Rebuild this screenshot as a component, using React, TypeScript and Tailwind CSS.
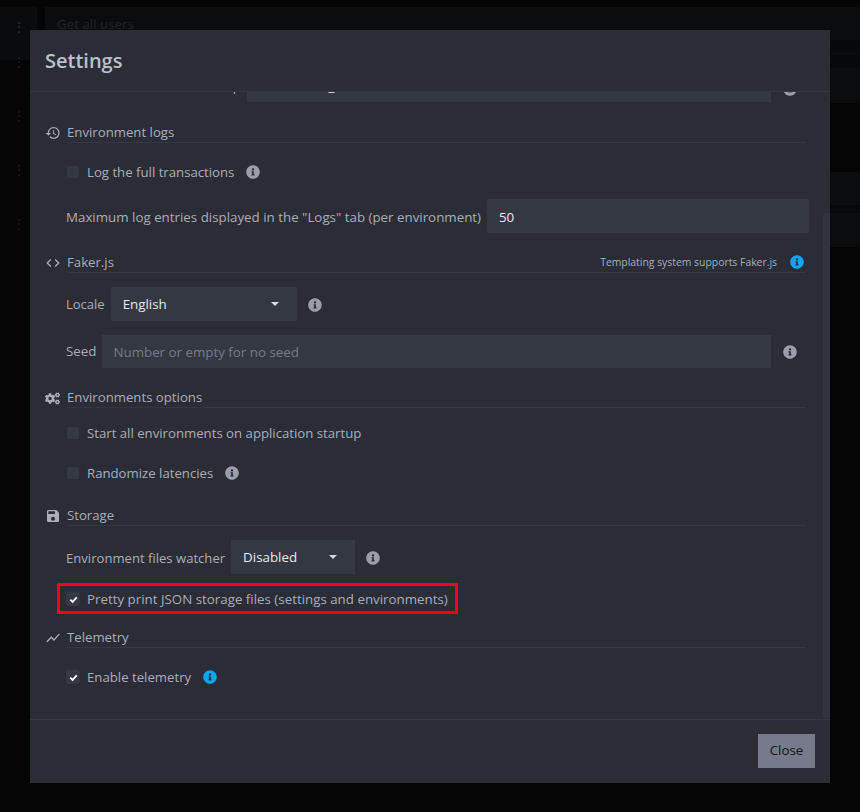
import React from "react";
import { FaInfoCircle, FaCogs } from "react-icons/fa";
import { MdHistory, MdCode, MdSave, MdShowChart } from "react-icons/md";

const font = "font-['Open_Sans',sans-serif]";

function InfoDot({ blue = false }: { blue?: boolean }) {
  return <FaInfoCircle size={14} className={`shrink-0 ${blue ? "text-[#0ea5f5]" : "text-[#9a9dac]"}`} />;
}

function Section({ icon, title, right, className }: { icon: React.ReactNode; title: string; right?: React.ReactNode; className?: string }) {
  return (
    <div className={`flex items-end ${className ?? ""}`}>
      <div className="w-[21px] h-[20px] flex items-center text-[#a9adbb] shrink-0 -ml-[1px] mr-[1px]">{icon}</div>
      <div className="flex-1 flex items-center justify-between border-b border-[#343843] h-[21px] pb-[1px] text-[#a9adbb] text-[13.2px] leading-[20px]">
        <span>{title}</span>
        {right}
      </div>
    </div>
  );
}

function Check({ checked, label, info, className, wide }: { checked?: boolean; label: string; info?: "gray" | "blue"; className?: string; wide?: boolean }) {
  return (
    <div className={`flex items-center h-[20px] ${className ?? ""}`}>
      <div className="w-[20px] flex items-center shrink-0">
        {checked ? (
          <div className="w-[14px] h-[14px] -ml-[1px] rounded-[3px] bg-[#343843] flex items-center justify-center">
            <svg viewBox="0 0 10 10" className="w-[9px] h-[9px]">
              <path d="M1.5 5.2 L4 7.7 L8.6 2.6" stroke="#ffffff" strokeWidth="2" fill="none" />
            </svg>
          </div>
        ) : (
          <div className="w-[12px] h-[12px] rounded-[2px] bg-[#343843]" />
        )}
      </div>
      <span className={`text-[#a9adbb] leading-[20px] whitespace-nowrap ${wide ? "text-[13.33px]" : "text-[13.2px]"}`}>{label}</span>
      {info && (
        <span className="ml-[12px]">
          <InfoDot blue={info === "blue"} />
        </span>
      )}
    </div>
  );
}

function Select({ value, width }: { value: string; width: string }) {
  return (
    <div className={`${width} h-[34px] bg-[#343843] flex items-center justify-between pl-[12px] pr-[18px] text-[13.33px] text-[#e8e9ee] shrink-0`}>
      <span className="pt-[2px]">{value}</span>
      <span className="w-0 h-0 border-x-[4px] border-x-transparent border-t-[4px] border-t-[#d8d9e0]" />
    </div>
  );
}

export default function App() {
  return (
    <div className={`relative w-[860px] h-[812px] overflow-hidden bg-[#050506] ${font}`}>
      {/* dimmed app behind */}
      <div className="flex h-full pt-[7px]">
        <div className="w-[37px] text-[#1a1b1e] text-[14px] flex flex-col items-center">
          <div className="w-full h-[53px] bg-[#0a0b0c] flex flex-col items-center">
            <span className="mt-[10px] leading-[20px] text-[#2c2d30]">⋮</span>
          </div>
          <span className="mt-[-8px] leading-[20px]">⋮</span>
          <span className="mt-[34px] leading-[20px]">⋮</span>
          <span className="mt-[34px] leading-[20px]">⋮</span>
          <span className="mt-[34px] leading-[20px]">⋮</span>
        </div>
        <div className="w-[8px]" />
        <div className="flex-1">
          <div className="h-[33px] pl-[12px] pt-[7px] bg-[#0b0c0e] text-[13.33px] leading-[20px] text-[#222326]">Get all users</div>
          <div className="h-[14px] border-b border-[#0d0e10] bg-[#070809]" />
          <div className="h-[14px] bg-[#070809]" />
          <div className="h-[35px] bg-[#0b0c0e]" />
          <div className="h-[69px]" />
          <div className="h-[33px] bg-[#0b0c0e]" />
          <div className="h-[8px] bg-[#070809]" />
          <div className="h-[34px] bg-[#0b0c0e]" />
        </div>
      </div>

      {/* modal */}
      <div className="absolute left-[30px] top-[30px] w-[800px] h-[753px] bg-[#2a2d36] flex flex-col">
        <div className="h-[62px] shrink-0 border-b border-[#343843] pl-[15px] pt-[16px] text-[20px] leading-[30px] font-semibold text-[#bcc0cc]">
          Settings
        </div>

        <div className="relative flex-1 min-h-0 overflow-hidden pl-[16px] pr-[24px]">
          <div className="pl-[20px] -mt-[24px] flex items-center gap-[6px] h-[34px]">
            <span className="text-[13.33px] text-[#a9adbb] w-[175px] whitespace-nowrap text-right pt-[4px]">Temp</span>
            <div className="w-[524px] h-[34px] bg-[#343843] pl-[12px] pt-[4px] flex items-center text-[13.33px] text-[#e8e9ee]">Mockoonsr_data</div>
            <span className="ml-[6px] pt-[8px]"><InfoDot /></span>
          </div>

          <Section className="mt-[20px]" icon={<MdHistory size={16} />} title="Environment logs" />
          <div className="pl-[20px]">
            <Check className="mt-[19px] ml-[1px]" label="Log the full transactions" info="gray" />
            <div className="mt-[17px] flex items-center gap-[6px]">
              <span className="text-[13.33px] text-[#a9adbb] whitespace-nowrap pt-[3px]">Maximum log entries displayed in the "Logs" tab (per environment)</span>
              <div className="flex-1 h-[34px] bg-[#343843] pl-[12px] pt-[3px] flex items-center text-[13.33px] text-[#e8e9ee] -mr-[3px]">50</div>
            </div>
          </div>

          <Section
            className="mt-[19px]"
            icon={<MdCode size={16} />}
            title="Faker.js"
            right={
              <span className="flex items-center gap-[13px] pr-[2px] text-[10.4px] text-[#a9adbb]">
                Templating system supports Faker.js <InfoDot blue />
              </span>
            }
          />
          <div className="pl-[20px]">
            <div className="mt-[14px] flex items-center gap-[6px]">
              <span className="text-[13px] text-[#a9adbb] pt-[1px]">Locale</span>
              <Select value="English" width="w-[186px]" />
              <span className="ml-[5px] pt-[2px]"><InfoDot /></span>
            </div>
            <div className="mt-[14px] flex items-center gap-[6px]">
              <span className="text-[13.33px] text-[#a9adbb] pt-[1px]">Seed</span>
              <div className="w-[669px] h-[33px] bg-[#343843] pl-[11px] pt-[2px] flex items-center text-[13.33px] text-[#767a89]">Number or empty for no seed</div>
              <span className="ml-[6px]"><InfoDot /></span>
            </div>
          </div>

          <Section className="mt-[19px]" icon={<FaCogs size={15} />} title="Environments options" />
          <div className="pl-[21px]">
            <Check className="mt-[15px]" label="Start all environments on application startup" />
            <Check className="mt-[20px]" label="Randomize latencies" info="gray" />
          </div>

          <Section className="mt-[22px]" icon={<MdSave size={16} />} title="Storage" />
          <div className="pl-[20px]">
            <div className="mt-[14px] flex items-center gap-[6px]">
              <span className="text-[13.1px] text-[#a9adbb] whitespace-nowrap pt-[3px]">Environment files watcher</span>
              <Select value="Disabled" width="w-[124px]" />
              <span className="ml-[5px] pt-[2px]"><InfoDot /></span>
            </div>
          </div>
          <div className="pl-[21px]">
            <Check className="mt-[15px]" checked wide label="Pretty print JSON storage files (settings and environments)" />
          </div>

          <Section className="mt-[18px]" icon={<MdShowChart size={16} />} title="Telemetry" />
          <div className="pl-[21px]">
            <Check className="mt-[19px]" checked label="Enable telemetry" info="blue" />
          </div>

          <div className="absolute right-0 top-[121px] bottom-[1px] w-[7px] rounded-tl-[3px] bg-[#30343e]" />
        </div>

        <div className="h-[64px] shrink-0 border-t border-[#343843] flex items-center justify-end pr-[15px] pb-[1px]">
          <button className="w-[57px] h-[34px] bg-[#767a8c] text-[#14151a] text-[13.33px]">Close</button>
        </div>

        {/* annotation */}
        <div className="absolute left-[27px] top-[553px] w-[401px] h-[31px] border-[3px] border-[#ff0000]" />
      </div>
    </div>
  );
}
